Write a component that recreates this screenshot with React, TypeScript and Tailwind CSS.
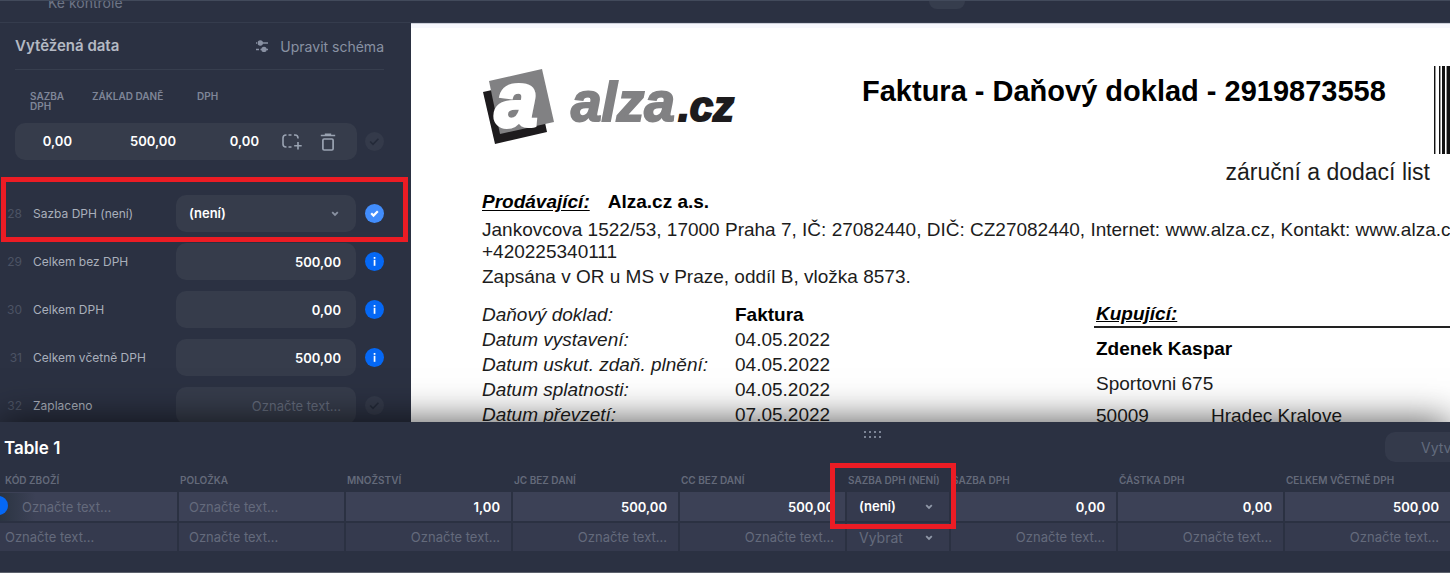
import React from 'react'
import { clsx } from 'clsx'

type Status = 'confirmed' | 'info' | 'empty'

type Field = {
  no: number
  label: string
  value?: string
  status: Status
  select?: boolean
}

const fields: Field[] = [
  { no: 28, label: 'Sazba DPH (není)', value: '(není)', status: 'confirmed', select: true },
  { no: 29, label: 'Celkem bez DPH', value: '500,00', status: 'info' },
  { no: 30, label: 'Celkem DPH', value: '0,00', status: 'info' },
  { no: 31, label: 'Celkem včetně DPH', value: '500,00', status: 'info' },
  { no: 32, label: 'Zaplaceno', status: 'empty' },
]

type Column = {
  label: string
  value?: string
  width: string
  left?: boolean
  select?: boolean
}

const columns: Column[] = [
  { label: 'Kód zboží', width: 'w-[178px]', left: true },
  { label: 'Položka', width: 'w-[167px]', left: true },
  { label: 'Množství', value: '1,00', width: 'w-[167px]' },
  { label: 'JC bez daní', value: '500,00', width: 'w-[167px]' },
  { label: 'CC bez daní', value: '500,00', width: 'w-[167px]' },
  { label: 'Sazba DPH (není)', value: '(není)', width: 'w-[104px]', select: true },
  { label: 'Sazba DPH', value: '0,00', width: 'w-[167px]' },
  { label: 'Částka DPH', value: '0,00', width: 'w-[167px]' },
  { label: 'Celkem včetně DPH', value: '500,00', width: 'w-[167px]' },
]

const dates = [
  ['Datum vystavení:', '04.05.2022'],
  ['Datum uskut. zdaň. plnění:', '04.05.2022'],
  ['Datum splatnosti:', '04.05.2022'],
  ['Datum převzetí:', '07.05.2022'],
]

function Chevron({ className }: { className?: string }) {
  return (
    <svg
      viewBox="0 0 8 6"
      className={clsx('pointer-events-none absolute h-[6px] w-2', className)}
      fill="none"
      stroke="currentColor"
      strokeWidth="1.8"
    >
      <path d="M1.2 1.2 4 4l2.8-2.8" />
    </svg>
  )
}

function StatusButton({ status, label }: { status: Status; label: string }) {
  return (
    <button
      type="button"
      aria-label={label}
      className={clsx(
        'flex size-[19px] shrink-0 items-center justify-center rounded-full',
        status === 'confirmed' && 'bg-[#428dfc] text-white',
        status === 'info' && 'bg-[#0568f5] text-white',
        status === 'empty' && 'bg-[#343a4a] text-[#242a39]',
      )}
    >
      {status === 'info' ? (
        <svg viewBox="0 0 19 19" className="size-[19px]" fill="currentColor">
          <rect x="8.7" y="5" width="1.7" height="1.8" />
          <rect x="8.7" y="7.8" width="1.7" height="6" />
        </svg>
      ) : (
        <svg
          viewBox="0 0 19 19"
          className="size-[19px]"
          fill="none"
          stroke="currentColor"
          strokeWidth={status === 'confirmed' ? 2.2 : 1.6}
        >
          {status === 'confirmed' ? <path d="m6.2 9.3 2.3 2.3 4.3-4.3" /> : <path d="m5.2 9.5 2.8 2.9 5.4-5.6" />}
        </svg>
      )}
    </button>
  )
}

function TaxRow() {
  return (
    <div className="mt-[21px]">
      <div className="flex text-[10px] leading-[10px] font-semibold text-[#7f8698] uppercase">
        <span className="ml-[15px] w-[62px] pr-5">Sazba DPH</span>
        <span className="w-[105px]">Základ daně</span>
        <span>DPH</span>
      </div>
      <div className="mt-3 flex items-center">
        <div className="flex h-[37px] flex-1 items-center rounded-[10px] bg-[#363c4b] text-[13px] font-semibold text-white">
          <input aria-label="Sazba DPH" defaultValue="0,00" className="w-[57px] text-right outline-none" />
          <input aria-label="Základ daně" defaultValue="500,00" className="w-[104px] text-right outline-none" />
          <input aria-label="DPH" defaultValue="0,00" className="w-[83px] text-right outline-none" />
          <button type="button" aria-label="Označit oblast" className="ml-[23px] text-[#9aa3b2]">
            <svg viewBox="0 0 20 16" className="h-4 w-5" fill="none" stroke="currentColor" strokeWidth="1.6">
              <path d="M4.500 1H4a3 3 0 0 0-3 3v6a3 3 0 0 0 3 3h.5M6.500 1h3M6.500 13h3M12 1h1a3 3 0 0 1 3 3v.5M16 8v7.500M12.200 11.800h7.500" />
            </svg>
          </button>
          <button type="button" aria-label="Smazat" className="ml-[18px] text-[#9aa3b2]">
            <svg viewBox="0 0 16 18" className="h-[18px] w-4" fill="none" stroke="currentColor" strokeWidth="1.700">
              <path d="M.8 2.500h14.400M4.800 1.300h6.400" />
              <rect x="2.900" y="6" width="10.200" height="11" rx="1.200" />
            </svg>
          </button>
        </div>
        <div className="ml-2">
          <StatusButton status="empty" label="Potvrdit řádek" />
        </div>
      </div>
    </div>
  )
}

function FieldRow({ field }: { field: Field }) {
  const id = `field-${field.no}`
  return (
    <div className="flex h-[37px] items-center">
      <span className="w-[22px] shrink-0 text-right text-[12px] text-[#4c5364]">{field.no}</span>
      <label htmlFor={id} className="ml-[11px] flex-1 text-[12px] text-[#a9afbb]">
        {field.label}
      </label>
      <div className="relative h-[37px] w-[180px]">
        {field.select ? (
          <>
            <select
              id={id}
              className="size-full appearance-none rounded-[10px] bg-[#363c4b] px-[13px] text-[13px] font-semibold text-white outline-none"
            >
              <option>{field.value}</option>
            </select>
            <Chevron className="top-4 right-[17px] text-[#8a92a2]" />
          </>
        ) : (
          <input
            id={id}
            defaultValue={field.value}
            placeholder="Označte text..."
            className="size-full rounded-[10px] bg-[#363c4b] px-[15px] text-right text-[13px] font-semibold text-white outline-none placeholder:font-normal placeholder:text-[#646b7b]"
          />
        )}
      </div>
      <div className="mr-[27px] ml-[9px]">
        <StatusButton status={field.status} label={`Stav: ${field.label}`} />
      </div>
    </div>
  )
}

function Sidebar() {
  return (
    <aside className="relative w-[411px] shrink-0">
      <div className="mr-[27px] ml-[15px]">
        <div className="flex h-[47px] items-center justify-between border-b border-[#373e4e]">
          <h2 className="text-[15px] font-semibold text-[#b4b9c3]">Vytěžená data</h2>
          <button type="button" className="flex items-center gap-3 text-[14px] text-[#8991a3]">
            <svg viewBox="0 0 12 12" className="size-3" fill="currentColor" stroke="currentColor" strokeWidth="1.5">
              <path d="M0 3h1M8 3h4M0 9.500h3M10 9.500h2" />
              <circle cx="4.300" cy="3" r="1.900" />
              <path d="M4 3h4M4.500 9.500h4" />
              <circle cx="8" cy="9.500" r="1.900" />
            </svg>
            Upravit schéma
          </button>
        </div>
        <TaxRow />
      </div>
      <div className="mt-[35px] flex flex-col gap-[11px]">
        {fields.map((field) => (
          <FieldRow key={field.no} field={field} />
        ))}
      </div>
      {/* highlight around field 28 */}
      <div className="pointer-events-none absolute top-[154px] left-px h-[65px] w-[407px] border-[5px] border-[#ec1c24]" />
    </aside>
  )
}

function AlzaLogo() {
  return (
    <svg
      viewBox="2 0 260 82"
      role="img"
      aria-label="alza.cz"
      className="h-[82px] w-[260px] shrink-0"
      fontFamily="Liberation Sans, Arial, sans-serif"
      fontWeight="700"
      fontStyle="italic"
    >
      <path d="M3 26 56 14l11 52-52 12Z" fill="#1d1b1d" />
      <path d="M9 15 62 3l12 53-54 12Z" fill="#818183" />
      <text x="15" y="60" fontSize="76" fill="#fff" stroke="#fff" strokeWidth="4">
        a
      </text>
      <text x="91" y="55" fontSize="55" fill="#818183" stroke="#818183" strokeWidth="2">
        alza
      </text>
      <text x="198" y="55" fontSize="42" fill="#1d1b1d" stroke="#1d1b1d" strokeWidth="2">
        .cz
      </text>
    </svg>
  )
}

function Barcode() {
  return (
    <svg viewBox="0 0 60 88" className="h-[88px] w-[60px] shrink-0">
      <path d="M0 0h1v88H0zM5 0h1v88H5zM8 0h3v88H8zM13 0h3v88h-3zM18 0h1v88h-1zM22 0h3v88h-3z" fill="#111" />
      <path d="M1 0h1v88H1zM6 0h1v88H6zM12 0h1v88h-1z" fill="#999" />
    </svg>
  )
}

function Invoice() {
  return (
    <main className="min-w-0 flex-1 overflow-hidden border-t border-[#cdd0da] bg-[#f7f8fd] pt-1">
      <article className="h-full min-w-[1090px] bg-white pt-[38px] pl-[71px] font-['Liberation_Sans',Arial,sans-serif] text-[19px] leading-[22px] whitespace-nowrap text-[#1c1c1c]">
        <div className="flex h-[125px]">
          <AlzaLogo />
          <div className="ml-[120px] w-[572px] shrink-0">
            <div className="flex">
              <h1 className="mt-2 w-[572px] shrink-0 text-[29px] leading-[34px] font-bold text-black">
                Faktura - Daňový doklad - 2919873558
              </h1>
              <Barcode />
            </div>
            <p className="mr-1 text-right text-[23px] leading-[36px]">záruční a dodací list</p>
          </div>
        </div>
        <p className="font-bold text-black">
          <span className="mr-[18px] italic underline underline-offset-2">Prodávající:</span>
          Alza.cz a.s.
        </p>
        <p className="mt-[6px]">
          Jankovcova 1522/53, 17000 Praha 7, IČ: 27082440, DIČ: CZ27082440, Internet: www.alza.cz, Kontakt: www.alza.cz
          <br />
          +420225340111
        </p>
        <p className="mt-[3px]">Zapsána v OR u MS v Praze, oddíl B, vložka 8573.</p>
        <div className="mt-[14px] flex">
          <dl className="grid w-[612px] shrink-0 grid-cols-[253px_1fr] leading-[25px]">
            <dt className="italic">Daňový doklad:</dt>
            <dd className="font-bold text-black">Faktura</dd>
            {dates.map(([label, value]) => (
              <React.Fragment key={label}>
                <dt className="italic">{label}</dt>
                <dd>{value}</dd>
              </React.Fragment>
            ))}
          </dl>
          <div className="flex-1">
            <h3 className="border-b-2 border-[#222] pl-[2px] leading-[24px] font-bold text-black italic">
              <span className="underline">Kupující:</span>
            </h3>
            <p className="mt-[10px] pl-[2px] font-bold text-black">Zdenek Kaspar</p>
            <p className="mt-[13px] pl-[2px]">Sportovni 675</p>
            <p className="mt-[10px] flex pl-[2px]">
              <span className="w-[115px]">50009</span>
              <span>Hradec Kralove</span>
            </p>
          </div>
        </div>
      </article>
    </main>
  )
}

function TableCell({ column, filled, first }: { column: Column; filled: boolean; first: boolean }) {
  const marker = filled && first
  return (
    <td
      className={clsx(
        'relative h-[30px] border-r-2 border-b-2 border-[#2b3142] p-0',
        filled && !column.select ? 'bg-[#3c4156]' : 'bg-[#353a4e]',
      )}
    >
      {column.select ? (
        <>
          <select
            aria-label={column.label}
            className={clsx(
              'block h-7 w-full appearance-none pl-3 outline-none',
              filled ? 'text-[13px] font-semibold text-white' : 'text-[14px] text-[#646a7c]',
            )}
          >
            <option>{filled ? column.value : 'Vybrat'}</option>
          </select>
          <Chevron className="top-3 right-4 text-[#9098a8]" />
        </>
      ) : (
        <input
          aria-label={column.label}
          defaultValue={filled ? column.value : undefined}
          placeholder="Označte text..."
          className={clsx(
            'block h-7 w-full text-[13px] font-semibold text-white outline-none placeholder:font-normal placeholder:text-[#646a7c]',
            !column.left && 'pr-[11px] text-right',
            column.left && !first && 'pl-[10px]',
            first && (marker ? 'bg-linear-to-r from-[#2b3442] to-transparent to-20% pl-[22px]' : 'pl-[5px]'),
          )}
        />
      )}
      {marker && <span className="absolute top-1 -left-[11px] size-[19px] rounded-full bg-[#0568f5]" />}
    </td>
  )
}

function LineItems() {
  return (
    <section className="relative shrink-0 border-b border-[#5c616c] bg-[#2b3142] pb-[19px] shadow-[0_0_36px_rgba(0,0,0,0.7)]">
      <div className="flex h-[46px] items-center justify-between overflow-hidden pt-1">
        <h2 className="pt-1 pl-1 text-[17px] font-semibold text-white">Table 1</h2>
        <div className="flex w-[65px] shrink-0 overflow-hidden">
          <button
            type="button"
            className="h-[30px] shrink-0 rounded-[10px] bg-[#343a4b] px-9 text-[14px] whitespace-nowrap text-[#626b7d]"
          >
            Vytvořit
          </button>
        </div>
      </div>
      {/* resize handle */}
      <div className="absolute top-[9px] left-[864px] grid grid-cols-4 gap-[3px]">
        {Array.from({ length: 8 }, (_, i) => (
          <span key={i} className="size-[2px] bg-[#7c8495]" />
        ))}
      </div>
      <table className="w-full table-fixed border-collapse">
        <thead>
          <tr>
            {columns.map((column, i) => (
              <th
                key={column.label}
                className={clsx(
                  'h-6 p-0 text-left text-[10px] font-semibold whitespace-nowrap text-[#646a7a] uppercase',
                  i === 0 ? 'pl-[5px]' : 'pl-[2px]',
                  column.width,
                )}
              >
                {column.label}
              </th>
            ))}
          </tr>
        </thead>
        <tbody>
          {[true, false].map((filled) => (
            <tr key={String(filled)}>
              {columns.map((column, i) => (
                <TableCell key={column.label} column={column} filled={filled} first={i === 0} />
              ))}
            </tr>
          ))}
        </tbody>
      </table>
      {/* highlight around the VAT rate column */}
      <div className="pointer-events-none absolute top-[41px] left-[830px] h-[66px] w-[126px] border-[5px] border-[#ec1c24]" />
    </section>
  )
}

function App() {
  return (
    <div className="flex h-screen flex-col overflow-hidden bg-white font-[Inter,sans-serif]">
      <header className="flex h-[23px] shrink-0 items-start overflow-hidden border-t border-b border-t-[#424a5b] border-b-[#353c4d] bg-[#2b3142]">
        <span className="w-[929px] pl-12 text-[14px] leading-[4px] text-[#6e7586]">Ke kontrole</span>
        <span className="h-2 w-9 rounded-b-lg bg-[#363d4d]" />
      </header>
      <div className="flex min-h-0 flex-1 overflow-hidden bg-[#2b3142]">
        <Sidebar />
        <Invoice />
      </div>
      <LineItems />
      <footer className="relative h-1 shrink-0 bg-white" />
    </div>
  )
}

export default App
